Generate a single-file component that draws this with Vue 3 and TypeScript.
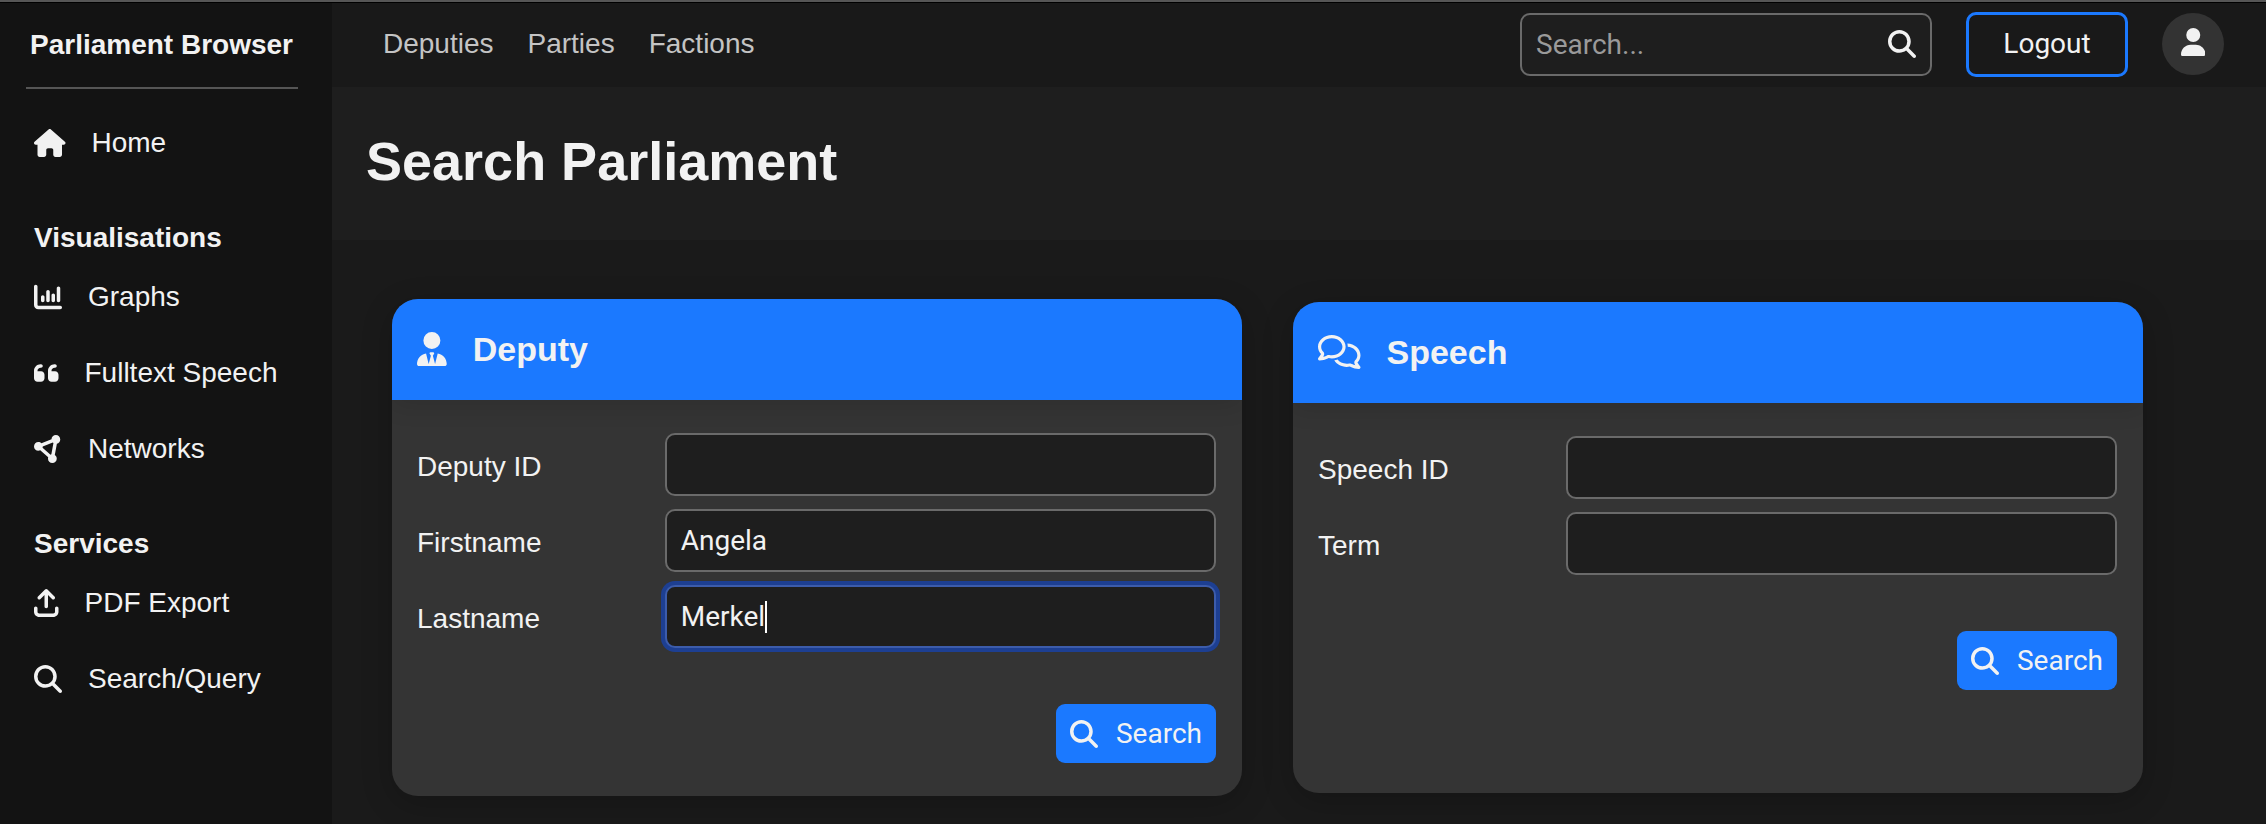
<script setup lang="ts">
import { computed, onMounted, ref } from 'vue'

interface Icon {
  width: number
  path: string
}

interface NavItem {
  label: string
  icon: Icon
}

const icons: Record<string, Icon> = {
  home: {
    width: 576,
    path: 'M575.8 255.5c0 18-15 32.1-32 32.1h-32l.7 160.2c0 2.7-.2 5.4-.5 8.1V472c0 22.1-17.9 40-40 40H456c-1.1 0-2.2 0-3.3-.1c-1.4 .1-2.8 .1-4.2 .1H416 392c-22.1 0-40-17.9-40-40V448 384c0-17.7-14.3-32-32-32H256c-17.7 0-32 14.3-32 32v64 24c0 22.1-17.9 40-40 40H160 128.1c-1.5 0-3-.1-4.5-.2c-1.2 .1-2.4 .2-3.6 .2H104c-22.1 0-40-17.9-40-40V360c0-.9 0-1.9 .1-2.8V287.6H32c-18 0-32-14-32-32.1c0-9 3-17 10-24L266.4 8c7-7 15-8 22-8s15 2 21 7L564.8 231.5c8 7 12 15 11 24z',
  },
  chart: {
    width: 512,
    path: 'M32 32c17.7 0 32 14.3 32 32V400c0 8.8 7.2 16 16 16H480c17.7 0 32 14.3 32 32s-14.3 32-32 32H80c-44.2 0-80-35.8-80-80V64C0 46.3 14.3 32 32 32zM160 224c17.7 0 32 14.3 32 32v64c0 17.7-14.3 32-32 32s-32-14.3-32-32V256c0-17.7 14.3-32 32-32zm128-64V320c0 17.7-14.3 32-32 32s-32-14.3-32-32V160c0-17.7 14.3-32 32-32s32 14.3 32 32zm64 32c17.7 0 32 14.3 32 32v96c0 17.7-14.3 32-32 32s-32-14.3-32-32V224c0-17.7 14.3-32 32-32zM480 96V320c0 17.7-14.3 32-32 32s-32-14.3-32-32V96c0-17.7 14.3-32 32-32s32 14.3 32 32z',
  },
  quote: {
    width: 448,
    path: 'M0 216C0 149.7 53.7 96 120 96h8c17.7 0 32 14.3 32 32s-14.3 32-32 32h-8c-30.9 0-56 25.1-56 56v8h64c35.3 0 64 28.7 64 64v64c0 35.3-28.7 64-64 64H64c-35.3 0-64-28.7-64-64V320 288 216zm256 0c0-66.3 53.7-120 120-120h8c17.7 0 32 14.3 32 32s-14.3 32-32 32h-8c-30.9 0-56 25.1-56 56v8h64c35.3 0 64 28.7 64 64v64c0 35.3-28.7 64-64 64H320c-35.3 0-64-28.7-64-64V320 288 216z',
  },
  nodes: {
    width: 512,
    path: 'M418.4 157.9c35.3-8.3 61.6-40 61.6-77.9c0-44.2-35.8-80-80-80c-43.4 0-78.7 34.5-80 77.5L136.2 151.1C121.7 136.8 101.9 128 80 128c-44.2 0-80 35.8-80 80s35.8 80 80 80c12.2 0 23.8-2.7 34.1-7.6L259.7 407.8c-2.4 7.6-3.7 15.8-3.7 24.2c0 44.2 35.8 80 80 80s80-35.8 80-80c0-27.7-14-52.1-35.4-66.4l37.8-207.7zM156.3 232.2c2.2-6.9 3.5-14.2 3.7-21.7l183.8-73.5c3.6 3.5 7.4 6.7 11.6 9.5L317.6 354.1c-5.5 1.3-10.8 3.1-15.8 5.5L156.3 232.2z',
  },
  upload: {
    width: 448,
    path: 'M246.6 9.4c-12.5-12.5-32.8-12.5-45.3 0l-128 128c-12.5 12.5-12.5 32.8 0 45.3s32.8 12.5 45.3 0L192 109.3V320c0 17.7 14.3 32 32 32s32-14.3 32-32V109.3l73.4 73.4c12.5 12.5 32.8 12.5 45.3 0s12.5-32.8 0-45.3l-128-128zM64 352c0-17.7-14.3-32-32-32s-32 14.3-32 32v64c0 53 43 96 96 96H352c53 0 96-43 96-96V352c0-17.7-14.3-32-32-32s-32 14.3-32 32v64c0 17.7-14.3 32-32 32H96c-17.7 0-32-14.3-32-32V352z',
  },
  search: {
    width: 512,
    path: 'M416 208c0 45.9-14.9 88.3-40 122.7L502.6 457.4c12.5 12.5 12.5 32.8 0 45.3s-32.8 12.5-45.3 0L330.7 376c-34.4 25.2-76.8 40-122.7 40C93.1 416 0 322.9 0 208S93.1 0 208 0S416 93.1 416 208zM208 352a144 144 0 1 0 0-288 144 144 0 1 0 0 288z',
  },
  user: {
    width: 448,
    path: 'M224 256A128 128 0 1 0 224 0a128 128 0 1 0 0 256zm-45.7 48C79.8 304 0 383.8 0 482.3C0 498.7 13.3 512 29.7 512H418.3c16.4 0 29.7-13.3 29.7-29.7C448 383.8 368.2 304 269.7 304H178.3z',
  },
  deputy: {
    width: 448,
    path: 'M224 256A128 128 0 1 1 224 0a128 128 0 1 1 0 256zM209.1 359.2l-18.6-31c-6.4-10.7 1.3-24.2 13.7-24.2H224h19.7c12.4 0 20.1 13.6 13.7 24.2l-18.6 31 33.4 123.9 39.5-161.2c77.2 12 136.3 78.8 136.3 159.4c0 17-13.8 30.7-30.7 30.7H265.1 182.9 30.7C13.8 512 0 498.2 0 481.3c0-80.6 59.1-147.4 136.3-159.4l39.5 161.2 33.4-123.9z',
  },
  speech: {
    width: 640,
    path: 'M88.2 309.1c9.8-18.3 6.8-40.8-7.5-55.8C59.4 230.9 48 204 48 176c0-63.5 63.8-128 160-128s160 64.5 160 128s-63.8 128-160 128c-13.1 0-25.8-1.3-37.8-3.6c-10.4-2-21.2-.6-30.7 4.2c-4.1 2.1-8.3 4.1-12.6 6c-16 7.2-32.9 13.5-49.9 18c2.8-4.6 5.4-9.1 7.9-13.6c1.1-1.9 2.2-3.9 3.2-5.9zM208 352c114.9 0 208-78.8 208-176S322.9 0 208 0S0 78.8 0 176c0 41.8 17.2 80.1 45.9 110.3c-.9 1.7-1.9 3.5-2.8 5.1c-10.3 18.4-22.3 36.5-36.6 52.1c-6.6 7-8.3 17.2-4.6 25.9C5.8 378.3 14.4 384 24 384c43 0 86.5-13.3 122.7-29.7c4.8-2.2 9.6-4.5 14.2-6.8c15.1 3 30.9 4.5 47.1 4.5zM432 480c16.2 0 31.9-1.6 47.1-4.5c4.6 2.3 9.4 4.6 14.2 6.8C529.5 498.7 573 512 616 512c9.6 0 18.2-5.7 22-14.5c3.8-8.8 2-19-4.6-25.9c-14.2-15.6-26.2-33.7-36.6-52.1c-.9-1.7-1.9-3.4-2.8-5.1C622.8 384.1 640 345.8 640 304c0-94.4-87.9-171.5-198.2-175.8c4.1 15.2 6.2 31.2 6.2 47.8l0 .6c87.2 6.7 144 67.5 144 127.4c0 28-11.4 54.9-32.7 77.2c-14.3 15-17.3 37.6-7.5 55.8c1.1 2 2.2 4 3.2 5.9c2.5 4.5 5.2 9 7.9 13.6c-17-4.5-33.9-10.7-49.9-18c-4.3-1.9-8.5-3.9-12.6-6c-9.5-4.8-20.3-6.2-30.7-4.2c-12.1 2.4-24.7 3.6-37.8 3.6c-61.7 0-110-26.5-136.8-62.3c-16 5.4-32.8 9.4-50 11.8C279 439.8 350 480 432 480z',
  },
}

const sections: { title: string; items: NavItem[] }[] = [
  {
    title: 'Visualisations',
    items: [
      { label: 'Graphs', icon: icons.chart },
      { label: 'Fulltext Speech', icon: icons.quote },
      { label: 'Networks', icon: icons.nodes },
    ],
  },
  {
    title: 'Services',
    items: [
      { label: 'PDF Export', icon: icons.upload },
      { label: 'Search/Query', icon: icons.search },
    ],
  },
]

const topLinks = ['Deputies', 'Parties', 'Factions']

const forms = ref([
  {
    title: 'Deputy',
    icon: icons.deputy,
    fields: [
      { id: 'deputy-id', label: 'Deputy ID', value: '' },
      { id: 'firstname', label: 'Firstname', value: 'Angela' },
      { id: 'lastname', label: 'Lastname', value: 'Merkel' },
    ],
  },
  {
    title: 'Speech',
    icon: icons.speech,
    fields: [
      { id: 'speech-id', label: 'Speech ID', value: '' },
      { id: 'term', label: 'Term', value: '' },
    ],
  },
])

const query = ref('')

// The caret is drawn over the focused field, after the text before the cursor.
const focusedId = ref('')
const textBeforeCaret = ref('')
const context = document.createElement('canvas').getContext('2d')

const caretOffset = computed(() => {
  if (!context) return 0
  context.font = '28px Roboto, "Liberation Sans", sans-serif'
  return Math.round(context.measureText(textBeforeCaret.value).width)
})

function trackCaret(event: Event) {
  const input = event.target as HTMLInputElement
  focusedId.value = input.id
  textBeforeCaret.value = input.value.slice(0, input.selectionEnd ?? input.value.length)
}

onMounted(() => {
  const input = document.getElementById('lastname') as HTMLInputElement | null
  if (!input) return
  input.focus()
  input.setSelectionRange(input.value.length, input.value.length)
  focusedId.value = input.id
  textBeforeCaret.value = input.value
})
</script>

<template>
  <div class="app">
    <aside class="sidebar">
      <div class="brand">Parliament Browser</div>
      <nav class="side-nav" aria-label="Main">
        <a class="side-link" href="#">
          <svg class="icon" :viewBox="`0 0 ${icons.home.width} 512`" aria-hidden="true"><path :d="icons.home.path" /></svg>
          <span>Home</span>
        </a>
        <section v-for="section in sections" :key="section.title" class="side-section">
          <h2 class="side-heading">{{ section.title }}</h2>
          <a v-for="item in section.items" :key="item.label" class="side-link" href="#">
            <svg class="icon" :viewBox="`0 0 ${item.icon.width} 512`" aria-hidden="true"><path :d="item.icon.path" /></svg>
            <span>{{ item.label }}</span>
          </a>
        </section>
      </nav>
    </aside>

    <div class="page">
      <header class="topbar">
        <nav class="top-nav" aria-label="Sections">
          <a v-for="link in topLinks" :key="link" class="top-link" href="#">{{ link }}</a>
        </nav>
        <form class="quick-search" role="search" @submit.prevent>
          <input v-model="query" class="quick-input" type="text" placeholder="Search..." aria-label="Search" />
          <button class="quick-button" type="submit" aria-label="Submit search">
            <svg class="icon" viewBox="0 0 512 512" aria-hidden="true"><path :d="icons.search.path" /></svg>
          </button>
        </form>
        <button class="logout" type="button">Logout</button>
        <button class="avatar" type="button" aria-label="Account">
          <svg class="icon" viewBox="0 0 448 512" aria-hidden="true"><path :d="icons.user.path" /></svg>
        </button>
      </header>

      <div class="title-band">
        <h1 class="title">Search Parliament</h1>
      </div>

      <main class="cards">
        <form v-for="form in forms" :key="form.title" class="card" @submit.prevent>
          <div class="card-head">
            <svg class="icon icon-large" :viewBox="`0 0 ${form.icon.width} 512`" aria-hidden="true"><path :d="form.icon.path" /></svg>
            <h2 class="card-title">{{ form.title }}</h2>
          </div>
          <div class="card-body">
            <div class="fields">
              <div v-for="field in form.fields" :key="field.id" class="field">
                <label class="label" :for="field.id">{{ field.label }}</label>
                <div class="control">
                  <input
                    :id="field.id"
                    v-model="field.value"
                    class="input"
                    type="text"
                    autocomplete="off"
                    spellcheck="false"
                    @focus="trackCaret"
                    @input="trackCaret"
                    @keyup="trackCaret"
                    @click="trackCaret"
                    @blur="focusedId = ''"
                  />
                  <span v-if="focusedId === field.id" class="caret" :style="{ marginLeft: `${caretOffset}px` }"></span>
                </div>
              </div>
            </div>
            <button class="submit" type="submit">
              <svg class="icon" viewBox="0 0 512 512" aria-hidden="true"><path :d="icons.search.path" /></svg>
              <span>Search</span>
            </button>
          </div>
        </form>
      </main>
    </div>
  </div>
</template>

<style>
body {
  margin: 0;
  background: #1a1a1a;
}
</style>

<style scoped>
.app {
  box-sizing: border-box;
  display: flex;
  min-height: 100vh;
  border-top: 2px solid #565656;
  background: #1a1a1a;
  color: #f2f2f2;
  font-family: "Liberation Sans", Helvetica, Arial, sans-serif;
  font-size: 28px;
  line-height: 32px;
}

.app *,
.app *::before {
  box-sizing: border-box;
}

a {
  color: inherit;
  text-decoration: none;
}

h1,
h2 {
  margin: 0;
}

button,
input {
  margin: 0;
  color: inherit;
  font-family: Roboto, "Liberation Sans", sans-serif;
  font-size: 28px;
  line-height: 32px;
}

button {
  cursor: pointer;
}

.icon {
  display: block;
  flex: none;
  width: auto;
  height: 28px;
  fill: currentColor;
}

.icon-large {
  height: 34px;
}

/* Sidebar */
.sidebar {
  flex: none;
  width: 332px;
  border-top: 1px solid #000;
  background: #131313;
}

.brand {
  margin: 0 34px 0 26px;
  padding: 26px 0 26px 4px;
  border-bottom: 2px solid #555;
  font-weight: 700;
  white-space: nowrap;
}

.side-nav {
  padding: 16px 0 0 34px;
}

.side-section {
  padding-top: 41px;
}

.side-heading {
  margin-bottom: 5px;
  font-size: 28px;
  line-height: 32px;
}

.side-link {
  display: flex;
  align-items: center;
  gap: 26px;
  padding: 22px 0;
  white-space: nowrap;
}

/* Top bar */
.page {
  flex: 1;
  min-width: 0;
}

.topbar {
  display: flex;
  align-items: center;
  gap: 34px;
  height: 85px;
  padding: 0 42px 2px 51px;
  border-top: 1px solid #000;
  background: #191919;
}

.top-nav {
  display: flex;
  gap: 34px;
  margin-right: auto;
}

.top-link {
  color: #c4c4c4;
}

.quick-search {
  display: flex;
  align-items: center;
  width: 412px;
  height: 63px;
  border: 2px solid #6a6a6a;
  border-radius: 10px;
  background: #1e1e1e;
}

.quick-input {
  flex: 1;
  min-width: 0;
  height: 100%;
  padding: 0 0 0 14px;
  border: 0;
  outline: 0;
  background: transparent;
}

.quick-input::placeholder {
  color: #9a9a9a;
  opacity: 1;
}

.quick-button {
  padding: 0 14px;
  border: 0;
  background: transparent;
}

.logout {
  width: 162px;
  height: 65px;
  padding: 0;
  border: 3px solid #1b79ff;
  border-radius: 10px;
  background: transparent;
}

.avatar {
  display: grid;
  place-items: center;
  width: 62px;
  height: 62px;
  padding: 0 0 4px;
  border: 0;
  border-radius: 50%;
  background: #333;
}

/* Heading */
.title-band {
  padding: 42px 34px 47px;
  background: #1e1e1e;
}

.title {
  font-size: 54px;
  line-height: 64px;
}

/* Cards */
.cards {
  display: grid;
  grid-template-columns: 1fr 1fr;
  align-items: center;
  gap: 51px;
  padding: 59px 123px 28px 60px;
}

.card {
  min-height: 491px;
  overflow: hidden;
  border-radius: 26px;
  background: #343434;
  box-shadow: 0 8px 32px rgba(0, 0, 0, 0.2);
}

.card-head {
  display: flex;
  align-items: center;
  gap: 26px;
  height: 101px;
  padding: 0 25px 2px;
  background: #1b79ff;
  box-shadow: 0 4px 24px rgba(0, 0, 0, 0.12);
}

.card-title {
  font-size: 34px;
  line-height: 40px;
}

.card-body {
  display: flex;
  flex-direction: column;
  align-items: flex-end;
  gap: 56px;
  padding: 33px 26px 33px 25px;
}

.fields {
  display: grid;
  gap: 13px;
  width: 100%;
}

.field {
  display: grid;
  grid-template-columns: 31% 69%;
  align-items: center;
}

.label {
  padding-top: 4px;
}

.control {
  position: relative;
}

.input {
  display: block;
  width: 100%;
  height: 63px;
  padding: 0 14px;
  border: 2px solid #6a6a6a;
  border-radius: 10px;
  outline: 0;
  background: #1e1e1e;
  caret-color: transparent;
}

.input:focus {
  border-color: #3c5cab;
  box-shadow: 0 0 0 4px #1d3f92;
}

.caret {
  position: absolute;
  top: 16px;
  left: 16px;
  width: 2px;
  height: 32px;
  background: #fff;
  pointer-events: none;
}

.submit {
  display: flex;
  align-items: center;
  gap: 18px;
  height: 59px;
  padding: 0 14px;
  border: 0;
  border-radius: 9px;
  background: #1b79ff;
}
</style>
